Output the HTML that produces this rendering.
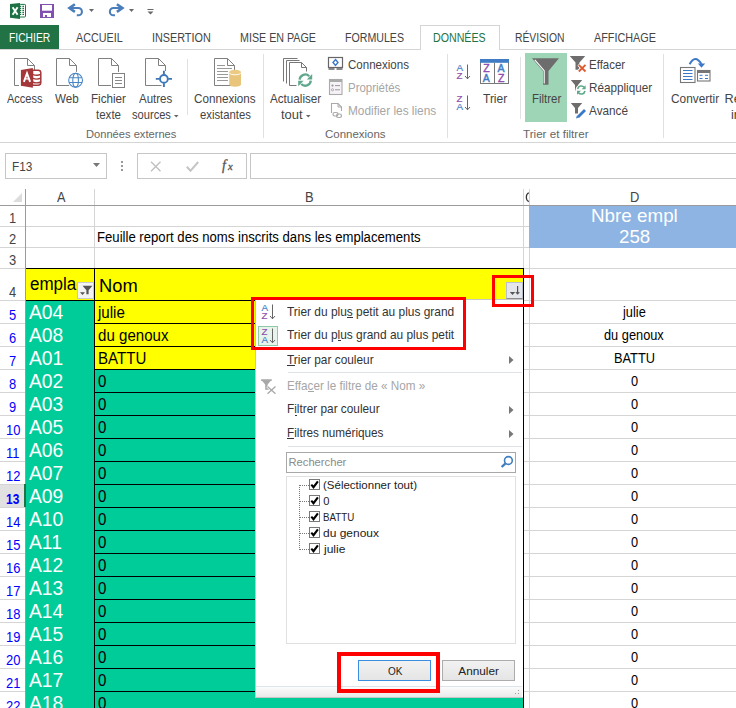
<!DOCTYPE html>
<html><head><meta charset="utf-8"><style>
html,body{margin:0;padding:0;}
body{width:736px;height:708px;overflow:hidden;position:relative;background:#fff;font-family:"Liberation Sans",sans-serif;}
.t{position:absolute;white-space:pre;line-height:normal;transform-origin:0 0;}
svg{overflow:visible}
</style></head><body>
<svg style="position:absolute;left:9px;top:1px" width="19" height="19" viewBox="0 0 19 19"><rect x="10.5" y="3.4" width="6" height="12.6" rx="0.8" fill="#fff" stroke="#1e7145" stroke-width="1"/>
<path d="M11 5.4H12.2M13.4 5.4H15M11 7.4H12.2M13.4 7.4H15M11 9.4H12.2M13.4 9.4H15M11 11.4H12.2M13.4 11.4H15M11 13.4H12.2M13.4 13.4H15" stroke="#1e7145" stroke-width="1.1"/>
<path d="M1 3.1L11 1.9V17.9L1 16.8Z" fill="#1e7145"/>
<path d="M3.6 6.3L8.6 13.8M8.6 6.3L3.6 13.8" stroke="#fff" stroke-width="1.9"/></svg>
<svg style="position:absolute;left:40px;top:4px" width="14" height="14" viewBox="0 0 14 14"><rect x="0" y="0" width="14" height="14" fill="#8150b0"/>
<rect x="2" y="1" width="10" height="5.7" fill="#fff"/>
<rect x="3" y="9" width="8" height="4" fill="#fff"/><rect x="5" y="11" width="2" height="2" fill="#8150b0"/></svg>
<svg style="position:absolute;left:68px;top:3px" width="16" height="15" viewBox="0 0 16 15"><path d="M3 5.05H10.3A3.6 3.6 0 0 1 10.3 12.3H8.8" fill="none" stroke="#4a7ebb" stroke-width="2.1"/>
<path d="M6.9 1.2L1.4 5.05L6.9 8.9" fill="none" stroke="#4a7ebb" stroke-width="2.6" stroke-linejoin="miter"/></svg>
<svg style="position:absolute;left:89px;top:9px" width="6" height="3" viewBox="0 0 6 3"><path d="M0 0H5L2.5 3Z" fill="#666"/></svg>
<svg style="position:absolute;left:108px;top:3px" width="16" height="15" viewBox="0 0 16 15"><g transform="translate(15.8 0) scale(-1 1)"><path d="M3 5.05H10.3A3.6 3.6 0 0 1 10.3 12.3H8.8" fill="none" stroke="#4a7ebb" stroke-width="2.1"/>
<path d="M6.9 1.2L1.4 5.05L6.9 8.9" fill="none" stroke="#4a7ebb" stroke-width="2.6" stroke-linejoin="miter"/></g></svg>
<svg style="position:absolute;left:129px;top:9px" width="6" height="3" viewBox="0 0 6 3"><path d="M0 0H5L2.5 3Z" fill="#666"/></svg>
<svg style="position:absolute;left:147px;top:8px" width="7" height="7" viewBox="0 0 7 7"><path d="M0.5 1.5H6.5" stroke="#666" stroke-width="1"/><path d="M0.5 3.5H6.5L3.5 6.5Z" fill="#666"/></svg>
<div style="position:absolute;left:0px;top:25px;width:59px;height:24px;background:#217346"></div>
<div style="position:absolute;left:0px;top:49px;width:736px;height:1px;background:#d5d5d5"></div>
<div style="position:absolute;left:420px;top:25px;width:80px;height:25px;background:#fff;border:1px solid #d5d5d5;border-bottom:none;box-sizing:border-box"></div>
<div class="t" style="left:8.50px;top:31.14px;font-size:12px;color:#fff;font-weight:normal;transform:scaleX(0.8583);">FICHIER</div>
<div class="t" style="left:76.00px;top:31.14px;font-size:12px;color:#444;font-weight:normal;transform:scaleX(0.8962);">ACCUEIL</div>
<div class="t" style="left:152.00px;top:31.14px;font-size:12px;color:#444;font-weight:normal;transform:scaleX(0.9017);">INSERTION</div>
<div class="t" style="left:240.00px;top:31.14px;font-size:12px;color:#444;font-weight:normal;transform:scaleX(0.8919);">MISE EN PAGE</div>
<div class="t" style="left:345.00px;top:31.14px;font-size:12px;color:#444;font-weight:normal;transform:scaleX(0.8846);">FORMULES</div>
<div class="t" style="left:433.40px;top:31.14px;font-size:12px;color:#217346;font-weight:normal;transform:scaleX(0.8870);">DONNÉES</div>
<div class="t" style="left:515.40px;top:31.14px;font-size:12px;color:#444;font-weight:normal;transform:scaleX(0.8621);">RÉVISION</div>
<div class="t" style="left:594.00px;top:31.14px;font-size:12px;color:#444;font-weight:normal;transform:scaleX(0.9025);">AFFICHAGE</div>
<div style="position:absolute;left:0px;top:142px;width:736px;height:1px;background:#d5d5d5"></div>
<div style="position:absolute;left:187px;top:59px;width:1px;height:56px;background:#e1e1e1"></div>
<div style="position:absolute;left:263px;top:54px;width:1px;height:84px;background:#e1e1e1"></div>
<div style="position:absolute;left:447px;top:54px;width:1px;height:84px;background:#e1e1e1"></div>
<div style="position:absolute;left:520px;top:57px;width:1px;height:62px;background:#e1e1e1"></div>
<div style="position:absolute;left:663px;top:54px;width:1px;height:84px;background:#e1e1e1"></div>
<div class="t" style="left:7.30px;top:91.51px;font-size:12.7px;color:#444;font-weight:normal;transform:scaleX(0.8680);">Access</div>
<div class="t" style="left:55.00px;top:91.51px;font-size:12.7px;color:#444;font-weight:normal;transform:scaleX(0.9151);">Web</div>
<div class="t" style="left:91.00px;top:91.51px;font-size:12.7px;color:#444;font-weight:normal;transform:scaleX(0.9186);">Fichier</div>
<div class="t" style="left:96.00px;top:108.01px;font-size:12.7px;color:#444;font-weight:normal;transform:scaleX(0.9091);">texte</div>
<div class="t" style="left:139.40px;top:91.51px;font-size:12.7px;color:#444;font-weight:normal;transform:scaleX(0.9074);">Autres</div>
<div class="t" style="left:132.00px;top:108.01px;font-size:12.7px;color:#444;font-weight:normal;transform:scaleX(0.8764);">sources</div>
<svg style="position:absolute;left:174px;top:115px" width="5" height="3" viewBox="0 0 5 3"><path d="M0 0H4.5L2.25 2.5Z" fill="#666"/></svg>
<div class="t" style="left:194.00px;top:91.51px;font-size:12.7px;color:#444;font-weight:normal;transform:scaleX(0.9195);">Connexions</div>
<div class="t" style="left:200.00px;top:108.01px;font-size:12.7px;color:#444;font-weight:normal;transform:scaleX(0.8916);">existantes</div>
<div class="t" style="left:270.40px;top:91.51px;font-size:12.7px;color:#444;font-weight:normal;transform:scaleX(0.9194);">Actualiser</div>
<div class="t" style="left:281.00px;top:108.01px;font-size:12.7px;color:#444;font-weight:normal;transform:scaleX(1.0236);">tout</div>
<svg style="position:absolute;left:306px;top:115px" width="5" height="3" viewBox="0 0 5 3"><path d="M0 0H4.5L2.25 2.5Z" fill="#666"/></svg>
<div class="t" style="left:347.70px;top:58.01px;font-size:12.7px;color:#444;font-weight:normal;transform:scaleX(0.9091);">Connexions</div>
<div class="t" style="left:347.70px;top:80.71px;font-size:12.7px;color:#a6a6a6;font-weight:normal;transform:scaleX(0.9033);">Propriétés</div>
<div class="t" style="left:347.70px;top:103.71px;font-size:12.7px;color:#a6a6a6;font-weight:normal;transform:scaleX(0.9334);">Modifier les liens</div>
<div class="t" style="left:483.40px;top:91.51px;font-size:12.7px;color:#444;font-weight:normal;transform:scaleX(0.9453);">Trier</div>
<div style="position:absolute;left:525px;top:53px;width:42px;height:69px;background:#9fd5b7"></div>
<div class="t" style="left:531.70px;top:91.51px;font-size:12.7px;color:#444;font-weight:normal;transform:scaleX(0.9015);">Filtrer</div>
<div class="t" style="left:588.80px;top:57.91px;font-size:12.7px;color:#444;font-weight:normal;transform:scaleX(0.9050);">Effacer</div>
<div class="t" style="left:588.80px;top:80.91px;font-size:12.7px;color:#444;font-weight:normal;transform:scaleX(0.9226);">Réappliquer</div>
<div class="t" style="left:588.80px;top:103.81px;font-size:12.7px;color:#444;font-weight:normal;transform:scaleX(0.9264);">Avancé</div>
<div class="t" style="left:670.70px;top:91.51px;font-size:12.7px;color:#444;font-weight:normal;transform:scaleX(0.9340);">Convertir</div>
<div class="t" style="left:724.50px;top:91.51px;font-size:12.7px;color:#444;font-weight:normal;transform:scaleX(1.0000);">Re</div>
<div class="t" style="left:731.00px;top:108.01px;font-size:12.7px;color:#444;font-weight:normal;transform:scaleX(1.0000);">in</div>
<div class="t" style="left:85.60px;top:126.82px;font-size:11.8px;color:#666;font-weight:normal;transform:scaleX(0.9436);">Données externes</div>
<div class="t" style="left:325.40px;top:126.82px;font-size:11.8px;color:#666;font-weight:normal;transform:scaleX(0.9727);">Connexions</div>
<div class="t" style="left:522.50px;top:126.82px;font-size:11.8px;color:#666;font-weight:normal;transform:scaleX(0.9864);">Trier et filtrer</div>
<div style="position:absolute;left:5px;top:153px;width:102px;height:26px;border:1px solid #c6c6c6;box-sizing:border-box"></div>
<div class="t" style="left:12.40px;top:159.33px;font-size:12.9px;color:#444;font-weight:normal;transform:scaleX(0.9144);">F13</div>
<svg style="position:absolute;left:93px;top:163px" width="7" height="4" viewBox="0 0 7 4"><path d="M0 0H7L3.5 4Z" fill="#777"/></svg>
<div style="position:absolute;left:121px;top:161px;width:2px;height:2px;background:#999"></div>
<div style="position:absolute;left:121px;top:165px;width:2px;height:2px;background:#999"></div>
<div style="position:absolute;left:121px;top:169px;width:2px;height:2px;background:#999"></div>
<div style="position:absolute;left:137px;top:153px;width:110px;height:26px;border:1px solid #c6c6c6;box-sizing:border-box"></div>
<div style="position:absolute;left:250px;top:153px;width:500px;height:26px;border:1px solid #c6c6c6;box-sizing:border-box"></div>
<div style="position:absolute;left:0px;top:189px;width:736px;height:17px;background:#fff"></div>
<div style="position:absolute;left:25px;top:189px;width:1px;height:519px;background:#9b9b9b"></div>
<div style="position:absolute;left:0px;top:205px;width:736px;height:1px;background:#9b9b9b"></div>
<div style="position:absolute;left:94px;top:189px;width:1px;height:16px;background:#d5d5d5"></div>
<div style="position:absolute;left:523px;top:189px;width:1px;height:16px;background:#d5d5d5"></div>
<div style="position:absolute;left:529px;top:189px;width:1px;height:16px;background:#d5d5d5"></div>
<svg style="position:absolute;left:13px;top:193px" width="9" height="9" viewBox="0 0 9 9"><path d="M9 0V9H0Z" fill="#dcdcdc"/></svg>
<div class="t" style="left:56.50px;top:189.42px;font-size:13.9px;color:#444;font-weight:normal;transform:scaleX(0.9140);">A</div>
<div class="t" style="left:304.68px;top:189.42px;font-size:13.9px;color:#444;font-weight:normal;transform:scaleX(0.9300);">B</div>
<div class="t" style="left:630.05px;top:189.42px;font-size:13.9px;color:#444;font-weight:normal;transform:scaleX(0.9300);">D</div>
<svg style="position:absolute;left:524px;top:192px" width="6" height="11" viewBox="0 0 6 11"><path d="M4.8 0.7 A4.3 4.9 0 0 0 4.8 9.6" fill="none" stroke="#333" stroke-width="1.2"/></svg>
<div style="position:absolute;left:0px;top:226px;width:25px;height:1px;background:#d5d5d5"></div>
<div style="position:absolute;left:0px;top:247px;width:25px;height:1px;background:#d5d5d5"></div>
<div style="position:absolute;left:0px;top:268px;width:25px;height:1px;background:#d5d5d5"></div>
<div style="position:absolute;left:0px;top:300px;width:25px;height:1px;background:#d5d5d5"></div>
<div style="position:absolute;left:0px;top:323px;width:25px;height:1px;background:#d5d5d5"></div>
<div style="position:absolute;left:0px;top:346px;width:25px;height:1px;background:#d5d5d5"></div>
<div style="position:absolute;left:0px;top:369px;width:25px;height:1px;background:#d5d5d5"></div>
<div style="position:absolute;left:0px;top:392px;width:25px;height:1px;background:#d5d5d5"></div>
<div style="position:absolute;left:0px;top:415px;width:25px;height:1px;background:#d5d5d5"></div>
<div style="position:absolute;left:0px;top:438px;width:25px;height:1px;background:#d5d5d5"></div>
<div style="position:absolute;left:0px;top:461px;width:25px;height:1px;background:#d5d5d5"></div>
<div style="position:absolute;left:0px;top:484px;width:25px;height:1px;background:#d5d5d5"></div>
<div style="position:absolute;left:0px;top:507px;width:25px;height:1px;background:#d5d5d5"></div>
<div style="position:absolute;left:0px;top:530px;width:25px;height:1px;background:#d5d5d5"></div>
<div style="position:absolute;left:0px;top:553px;width:25px;height:1px;background:#d5d5d5"></div>
<div style="position:absolute;left:0px;top:576px;width:25px;height:1px;background:#d5d5d5"></div>
<div style="position:absolute;left:0px;top:599px;width:25px;height:1px;background:#d5d5d5"></div>
<div style="position:absolute;left:0px;top:622px;width:25px;height:1px;background:#d5d5d5"></div>
<div style="position:absolute;left:0px;top:645px;width:25px;height:1px;background:#d5d5d5"></div>
<div style="position:absolute;left:0px;top:668px;width:25px;height:1px;background:#d5d5d5"></div>
<div style="position:absolute;left:0px;top:691px;width:25px;height:1px;background:#d5d5d5"></div>
<div style="position:absolute;left:0px;top:714px;width:25px;height:1px;background:#d5d5d5"></div>
<div style="position:absolute;left:524px;top:226px;width:212px;height:1px;background:#d5d5d5"></div>
<div style="position:absolute;left:524px;top:247px;width:212px;height:1px;background:#d5d5d5"></div>
<div style="position:absolute;left:524px;top:268px;width:212px;height:1px;background:#d5d5d5"></div>
<div style="position:absolute;left:524px;top:300px;width:212px;height:1px;background:#d5d5d5"></div>
<div style="position:absolute;left:524px;top:323px;width:212px;height:1px;background:#d5d5d5"></div>
<div style="position:absolute;left:524px;top:346px;width:212px;height:1px;background:#d5d5d5"></div>
<div style="position:absolute;left:524px;top:369px;width:212px;height:1px;background:#d5d5d5"></div>
<div style="position:absolute;left:524px;top:392px;width:212px;height:1px;background:#d5d5d5"></div>
<div style="position:absolute;left:524px;top:415px;width:212px;height:1px;background:#d5d5d5"></div>
<div style="position:absolute;left:524px;top:438px;width:212px;height:1px;background:#d5d5d5"></div>
<div style="position:absolute;left:524px;top:461px;width:212px;height:1px;background:#d5d5d5"></div>
<div style="position:absolute;left:524px;top:484px;width:212px;height:1px;background:#d5d5d5"></div>
<div style="position:absolute;left:524px;top:507px;width:212px;height:1px;background:#d5d5d5"></div>
<div style="position:absolute;left:524px;top:530px;width:212px;height:1px;background:#d5d5d5"></div>
<div style="position:absolute;left:524px;top:553px;width:212px;height:1px;background:#d5d5d5"></div>
<div style="position:absolute;left:524px;top:576px;width:212px;height:1px;background:#d5d5d5"></div>
<div style="position:absolute;left:524px;top:599px;width:212px;height:1px;background:#d5d5d5"></div>
<div style="position:absolute;left:524px;top:622px;width:212px;height:1px;background:#d5d5d5"></div>
<div style="position:absolute;left:524px;top:645px;width:212px;height:1px;background:#d5d5d5"></div>
<div style="position:absolute;left:524px;top:668px;width:212px;height:1px;background:#d5d5d5"></div>
<div style="position:absolute;left:524px;top:691px;width:212px;height:1px;background:#d5d5d5"></div>
<div style="position:absolute;left:524px;top:714px;width:212px;height:1px;background:#d5d5d5"></div>
<div style="position:absolute;left:26px;top:226px;width:498px;height:1px;background:#d5d5d5"></div>
<div style="position:absolute;left:26px;top:247px;width:498px;height:1px;background:#d5d5d5"></div>
<div style="position:absolute;left:94px;top:206px;width:1px;height:62px;background:#d5d5d5"></div>
<div style="position:absolute;left:523px;top:206px;width:1px;height:62px;background:#d5d5d5"></div>
<div style="position:absolute;left:529px;top:206px;width:1px;height:502px;background:#d5d5d5"></div>
<div class="t" style="left:9.22px;top:210.42px;font-size:13.9px;color:#444;font-weight:normal;transform:scaleX(0.9300);">1</div>
<div class="t" style="left:9.22px;top:231.42px;font-size:13.9px;color:#444;font-weight:normal;transform:scaleX(0.9300);">2</div>
<div class="t" style="left:9.22px;top:252.42px;font-size:13.9px;color:#444;font-weight:normal;transform:scaleX(0.9300);">3</div>
<div class="t" style="left:9.22px;top:284.42px;font-size:13.9px;color:#444;font-weight:normal;transform:scaleX(0.9300);">4</div>
<div class="t" style="left:9.22px;top:307.42px;font-size:13.9px;color:#0000ff;font-weight:normal;transform:scaleX(0.9300);">5</div>
<div class="t" style="left:9.22px;top:330.42px;font-size:13.9px;color:#0000ff;font-weight:normal;transform:scaleX(0.9300);">6</div>
<div class="t" style="left:9.22px;top:353.42px;font-size:13.9px;color:#0000ff;font-weight:normal;transform:scaleX(0.9300);">7</div>
<div class="t" style="left:9.22px;top:376.42px;font-size:13.9px;color:#0000ff;font-weight:normal;transform:scaleX(0.9300);">8</div>
<div class="t" style="left:9.22px;top:399.42px;font-size:13.9px;color:#0000ff;font-weight:normal;transform:scaleX(0.9300);">9</div>
<div class="t" style="left:5.59px;top:422.42px;font-size:13.9px;color:#0000ff;font-weight:normal;transform:scaleX(0.9300);">10</div>
<div class="t" style="left:6.10px;top:445.42px;font-size:13.9px;color:#0000ff;font-weight:normal;transform:scaleX(0.9300);">11</div>
<div class="t" style="left:5.59px;top:468.42px;font-size:13.9px;color:#0000ff;font-weight:normal;transform:scaleX(0.9300);">12</div>
<div style="position:absolute;left:0px;top:485px;width:24px;height:22px;background:#e1e1e1"></div>
<div style="position:absolute;left:24px;top:484px;width:2px;height:23px;background:#217346"></div>
<div class="t" style="left:6.14px;top:491.42px;font-size:13.9px;color:#0000ff;font-weight:bold;transform:scaleX(0.8600);">13</div>
<div class="t" style="left:5.59px;top:514.42px;font-size:13.9px;color:#0000ff;font-weight:normal;transform:scaleX(0.9300);">14</div>
<div class="t" style="left:5.59px;top:537.42px;font-size:13.9px;color:#0000ff;font-weight:normal;transform:scaleX(0.9300);">15</div>
<div class="t" style="left:5.59px;top:560.42px;font-size:13.9px;color:#0000ff;font-weight:normal;transform:scaleX(0.9300);">16</div>
<div class="t" style="left:5.59px;top:583.42px;font-size:13.9px;color:#0000ff;font-weight:normal;transform:scaleX(0.9300);">17</div>
<div class="t" style="left:5.59px;top:606.42px;font-size:13.9px;color:#0000ff;font-weight:normal;transform:scaleX(0.9300);">18</div>
<div class="t" style="left:5.59px;top:629.42px;font-size:13.9px;color:#0000ff;font-weight:normal;transform:scaleX(0.9300);">19</div>
<div class="t" style="left:5.59px;top:652.42px;font-size:13.9px;color:#0000ff;font-weight:normal;transform:scaleX(0.9300);">20</div>
<div class="t" style="left:5.59px;top:675.42px;font-size:13.9px;color:#0000ff;font-weight:normal;transform:scaleX(0.9300);">21</div>
<div class="t" style="left:5.59px;top:698.42px;font-size:13.9px;color:#0000ff;font-weight:normal;transform:scaleX(0.9300);">22</div>
<div style="position:absolute;left:529px;top:206px;width:207px;height:42px;background:#8db4e2"></div>
<div class="t" style="left:590.94px;top:205.41px;font-size:19px;color:#fff;font-weight:normal;transform:scaleX(0.9900);">Nbre empl</div>
<div class="t" style="left:618.69px;top:226.31px;font-size:19px;color:#fff;font-weight:normal;transform:scaleX(0.9850);">258</div>
<div class="t" style="left:97.40px;top:229.13px;font-size:14px;color:#000;font-weight:normal;transform:scaleX(0.9388);">Feuille report des noms inscrits dans les emplacements</div>
<div style="position:absolute;left:26px;top:268px;width:498px;height:440px;background:#00cc99"></div>
<div style="position:absolute;left:26px;top:269px;width:497px;height:31px;background:#ffff00"></div>
<div style="position:absolute;left:95px;top:300px;width:428px;height:69px;background:#ffff00"></div>
<div style="position:absolute;left:26px;top:268px;width:498px;height:1px;background:#000"></div>
<div style="position:absolute;left:95px;top:300px;width:429px;height:1px;background:#000"></div>
<div style="position:absolute;left:95px;top:323px;width:429px;height:1px;background:#000"></div>
<div style="position:absolute;left:95px;top:346px;width:429px;height:1px;background:#000"></div>
<div style="position:absolute;left:95px;top:369px;width:429px;height:1px;background:#000"></div>
<div style="position:absolute;left:95px;top:392px;width:429px;height:1px;background:#000"></div>
<div style="position:absolute;left:95px;top:415px;width:429px;height:1px;background:#000"></div>
<div style="position:absolute;left:95px;top:438px;width:429px;height:1px;background:#000"></div>
<div style="position:absolute;left:95px;top:461px;width:429px;height:1px;background:#000"></div>
<div style="position:absolute;left:95px;top:484px;width:429px;height:1px;background:#000"></div>
<div style="position:absolute;left:95px;top:507px;width:429px;height:1px;background:#000"></div>
<div style="position:absolute;left:95px;top:530px;width:429px;height:1px;background:#000"></div>
<div style="position:absolute;left:95px;top:553px;width:429px;height:1px;background:#000"></div>
<div style="position:absolute;left:95px;top:576px;width:429px;height:1px;background:#000"></div>
<div style="position:absolute;left:95px;top:599px;width:429px;height:1px;background:#000"></div>
<div style="position:absolute;left:95px;top:622px;width:429px;height:1px;background:#000"></div>
<div style="position:absolute;left:95px;top:645px;width:429px;height:1px;background:#000"></div>
<div style="position:absolute;left:95px;top:668px;width:429px;height:1px;background:#000"></div>
<div style="position:absolute;left:95px;top:691px;width:429px;height:1px;background:#000"></div>
<div style="position:absolute;left:95px;top:714px;width:429px;height:1px;background:#000"></div>
<div style="position:absolute;left:26px;top:300px;width:69px;height:1px;background:#000"></div>
<div style="position:absolute;left:94px;top:268px;width:1px;height:440px;background:#000"></div>
<div style="position:absolute;left:523px;top:268px;width:1px;height:440px;background:#000"></div>
<div style="position:absolute;left:26px;top:269px;width:51px;height:31px;overflow:hidden">
<div class="t" style="left:3.60px;top:5.31px;font-size:18px;color:#000;font-weight:normal;transform:scaleX(0.9440);">emplacement</div>
</div>
<div class="t" style="left:98.70px;top:275.53px;font-size:18.2px;color:#000;font-weight:normal;transform:scaleX(1.0078);">Nom</div>
<div style="position:absolute;left:77px;top:282px;width:17px;height:17px;background:#f3f3f3;border:1px solid #c8c8c8;box-sizing:border-box"></div>
<svg style="position:absolute;left:79px;top:284px" width="15" height="13" viewBox="0 0 15 13"><path d="M3.6 1.8H13.4L9.6 6.2V10.2H7.4V6.2Z" fill="#555"/><path d="M1 8.2H6L3.5 11Z" fill="#555"/></svg>
<div style="position:absolute;left:506px;top:282px;width:17px;height:17px;background:#e4e6ec;border:1px solid #b9bfcc;border-bottom:1px solid #8c8c8c;box-sizing:border-box"></div>
<svg style="position:absolute;left:508px;top:284px" width="13" height="13" viewBox="0 0 13 13"><path d="M1.8 8H7.2L4.5 11Z" fill="#555"/><path d="M9.6 2V9.8M7.9 8.1L9.6 9.8L11.3 8.1" fill="none" stroke="#555" stroke-width="1.2"/></svg>
<div class="t" style="left:29.10px;top:301.39px;font-size:19.9px;color:#fff;font-weight:normal;transform:scaleX(0.9700);">A04</div>
<div class="t" style="left:98.06px;top:302.87px;font-size:16.5px;color:#000;font-weight:normal;transform:scaleX(0.9150);">julie</div>
<div class="t" style="left:623.10px;top:304.13px;font-size:14px;color:#000;font-weight:normal;transform:scaleX(0.9140);">julie</div>
<div class="t" style="left:29.10px;top:324.39px;font-size:19.9px;color:#fff;font-weight:normal;transform:scaleX(0.9700);">A08</div>
<div class="t" style="left:97.60px;top:325.87px;font-size:16.5px;color:#000;font-weight:normal;transform:scaleX(0.9150);">du genoux</div>
<div class="t" style="left:604.41px;top:327.13px;font-size:14px;color:#000;font-weight:normal;transform:scaleX(0.9140);">du genoux</div>
<div class="t" style="left:29.10px;top:347.39px;font-size:19.9px;color:#fff;font-weight:normal;transform:scaleX(0.9700);">A01</div>
<div class="t" style="left:97.60px;top:348.87px;font-size:16.5px;color:#000;font-weight:normal;transform:scaleX(0.9150);">BATTU</div>
<div class="t" style="left:613.78px;top:350.13px;font-size:14px;color:#000;font-weight:normal;transform:scaleX(0.9140);">BATTU</div>
<div class="t" style="left:29.10px;top:370.39px;font-size:19.9px;color:#fff;font-weight:normal;transform:scaleX(0.9700);">A02</div>
<div class="t" style="left:97.60px;top:371.87px;font-size:16.5px;color:#000;font-weight:normal;transform:scaleX(0.9150);">0</div>
<div class="t" style="left:630.74px;top:373.13px;font-size:14px;color:#000;font-weight:normal;transform:scaleX(0.9140);">0</div>
<div class="t" style="left:29.10px;top:393.39px;font-size:19.9px;color:#fff;font-weight:normal;transform:scaleX(0.9700);">A03</div>
<div class="t" style="left:97.60px;top:394.87px;font-size:16.5px;color:#000;font-weight:normal;transform:scaleX(0.9150);">0</div>
<div class="t" style="left:630.74px;top:396.13px;font-size:14px;color:#000;font-weight:normal;transform:scaleX(0.9140);">0</div>
<div class="t" style="left:29.10px;top:416.39px;font-size:19.9px;color:#fff;font-weight:normal;transform:scaleX(0.9700);">A05</div>
<div class="t" style="left:97.60px;top:417.87px;font-size:16.5px;color:#000;font-weight:normal;transform:scaleX(0.9150);">0</div>
<div class="t" style="left:630.74px;top:419.13px;font-size:14px;color:#000;font-weight:normal;transform:scaleX(0.9140);">0</div>
<div class="t" style="left:29.10px;top:439.39px;font-size:19.9px;color:#fff;font-weight:normal;transform:scaleX(0.9700);">A06</div>
<div class="t" style="left:97.60px;top:440.87px;font-size:16.5px;color:#000;font-weight:normal;transform:scaleX(0.9150);">0</div>
<div class="t" style="left:630.74px;top:442.13px;font-size:14px;color:#000;font-weight:normal;transform:scaleX(0.9140);">0</div>
<div class="t" style="left:29.10px;top:462.39px;font-size:19.9px;color:#fff;font-weight:normal;transform:scaleX(0.9700);">A07</div>
<div class="t" style="left:97.60px;top:463.87px;font-size:16.5px;color:#000;font-weight:normal;transform:scaleX(0.9150);">0</div>
<div class="t" style="left:630.74px;top:465.13px;font-size:14px;color:#000;font-weight:normal;transform:scaleX(0.9140);">0</div>
<div class="t" style="left:29.10px;top:485.39px;font-size:19.9px;color:#fff;font-weight:normal;transform:scaleX(0.9700);">A09</div>
<div class="t" style="left:97.60px;top:486.87px;font-size:16.5px;color:#000;font-weight:normal;transform:scaleX(0.9150);">0</div>
<div class="t" style="left:630.74px;top:488.13px;font-size:14px;color:#000;font-weight:normal;transform:scaleX(0.9140);">0</div>
<div class="t" style="left:29.10px;top:508.39px;font-size:19.9px;color:#fff;font-weight:normal;transform:scaleX(0.9700);">A10</div>
<div class="t" style="left:97.60px;top:509.87px;font-size:16.5px;color:#000;font-weight:normal;transform:scaleX(0.9150);">0</div>
<div class="t" style="left:630.74px;top:511.13px;font-size:14px;color:#000;font-weight:normal;transform:scaleX(0.9140);">0</div>
<div class="t" style="left:29.10px;top:531.39px;font-size:19.9px;color:#fff;font-weight:normal;transform:scaleX(0.9700);">A11</div>
<div class="t" style="left:97.60px;top:532.87px;font-size:16.5px;color:#000;font-weight:normal;transform:scaleX(0.9150);">0</div>
<div class="t" style="left:630.74px;top:534.13px;font-size:14px;color:#000;font-weight:normal;transform:scaleX(0.9140);">0</div>
<div class="t" style="left:29.10px;top:554.39px;font-size:19.9px;color:#fff;font-weight:normal;transform:scaleX(0.9700);">A12</div>
<div class="t" style="left:97.60px;top:555.87px;font-size:16.5px;color:#000;font-weight:normal;transform:scaleX(0.9150);">0</div>
<div class="t" style="left:630.74px;top:557.13px;font-size:14px;color:#000;font-weight:normal;transform:scaleX(0.9140);">0</div>
<div class="t" style="left:29.10px;top:577.39px;font-size:19.9px;color:#fff;font-weight:normal;transform:scaleX(0.9700);">A13</div>
<div class="t" style="left:97.60px;top:578.87px;font-size:16.5px;color:#000;font-weight:normal;transform:scaleX(0.9150);">0</div>
<div class="t" style="left:630.74px;top:580.13px;font-size:14px;color:#000;font-weight:normal;transform:scaleX(0.9140);">0</div>
<div class="t" style="left:29.10px;top:600.39px;font-size:19.9px;color:#fff;font-weight:normal;transform:scaleX(0.9700);">A14</div>
<div class="t" style="left:97.60px;top:601.87px;font-size:16.5px;color:#000;font-weight:normal;transform:scaleX(0.9150);">0</div>
<div class="t" style="left:630.74px;top:603.13px;font-size:14px;color:#000;font-weight:normal;transform:scaleX(0.9140);">0</div>
<div class="t" style="left:29.10px;top:623.39px;font-size:19.9px;color:#fff;font-weight:normal;transform:scaleX(0.9700);">A15</div>
<div class="t" style="left:97.60px;top:624.87px;font-size:16.5px;color:#000;font-weight:normal;transform:scaleX(0.9150);">0</div>
<div class="t" style="left:630.74px;top:626.13px;font-size:14px;color:#000;font-weight:normal;transform:scaleX(0.9140);">0</div>
<div class="t" style="left:29.10px;top:646.39px;font-size:19.9px;color:#fff;font-weight:normal;transform:scaleX(0.9700);">A16</div>
<div class="t" style="left:97.60px;top:647.87px;font-size:16.5px;color:#000;font-weight:normal;transform:scaleX(0.9150);">0</div>
<div class="t" style="left:630.74px;top:649.13px;font-size:14px;color:#000;font-weight:normal;transform:scaleX(0.9140);">0</div>
<div class="t" style="left:29.10px;top:669.39px;font-size:19.9px;color:#fff;font-weight:normal;transform:scaleX(0.9700);">A17</div>
<div class="t" style="left:97.60px;top:670.87px;font-size:16.5px;color:#000;font-weight:normal;transform:scaleX(0.9150);">0</div>
<div class="t" style="left:630.74px;top:672.13px;font-size:14px;color:#000;font-weight:normal;transform:scaleX(0.9140);">0</div>
<div class="t" style="left:29.10px;top:692.39px;font-size:19.9px;color:#fff;font-weight:normal;transform:scaleX(0.9700);">A18</div>
<div class="t" style="left:97.60px;top:693.87px;font-size:16.5px;color:#000;font-weight:normal;transform:scaleX(0.9150);">0</div>
<div class="t" style="left:630.74px;top:695.13px;font-size:14px;color:#000;font-weight:normal;transform:scaleX(0.9140);">0</div>
<div style="position:absolute;left:255px;top:299px;width:268px;height:399px;background:#fff;border:1px solid #c6c6c6;border-right:none;box-sizing:border-box"></div>
<div class="t" style="left:287.30px;top:304.51px;font-size:12.7px;color:#333;font-weight:normal;transform:scaleX(0.9394);">Trier du plus petit au plus grand</div>
<div class="t" style="left:287.30px;top:328.01px;font-size:12.7px;color:#333;font-weight:normal;transform:scaleX(0.9394);">Trier du plus grand au plus petit</div>
<div class="t" style="left:287.30px;top:352.51px;font-size:12.7px;color:#333;font-weight:normal;transform:scaleX(0.9353);">Trier par couleur</div>
<div style="position:absolute;left:288px;top:372px;width:234px;height:1px;background:#dfe2e6"></div>
<div class="t" style="left:287.30px;top:378.51px;font-size:12.7px;color:#a6a6a6;font-weight:normal;transform:scaleX(0.9221);">Effacer le filtre de « Nom »</div>
<div class="t" style="left:287.30px;top:402.21px;font-size:12.7px;color:#333;font-weight:normal;transform:scaleX(0.9317);">Filtrer par couleur</div>
<div class="t" style="left:287.30px;top:425.91px;font-size:12.7px;color:#333;font-weight:normal;transform:scaleX(0.9244);">Filtres numériques</div>
<div style="position:absolute;left:288px;top:446px;width:234px;height:1px;background:#dfe2e6"></div>
<div style="position:absolute;left:347.19px;top:317px;width:5.96px;height:1px;background:#333"></div>
<div style="position:absolute;left:337.91px;top:340px;width:2.65px;height:1px;background:#333"></div>
<div style="position:absolute;left:287.30px;top:365px;width:7.26px;height:1px;background:#333"></div>
<div style="position:absolute;left:307.92px;top:391px;width:5.86px;height:1px;background:#a6a6a6"></div>
<div style="position:absolute;left:294.53px;top:415px;width:2.63px;height:1px;background:#333"></div>
<div style="position:absolute;left:287.30px;top:438px;width:7.17px;height:1px;background:#333"></div>
<svg style="position:absolute;left:509px;top:356px" width="5" height="8" viewBox="0 0 5 8"><path d="M0 0L4.5 4L0 8Z" fill="#777"/></svg>
<svg style="position:absolute;left:509px;top:406px" width="5" height="8" viewBox="0 0 5 8"><path d="M0 0L4.5 4L0 8Z" fill="#777"/></svg>
<svg style="position:absolute;left:509px;top:430px" width="5" height="8" viewBox="0 0 5 8"><path d="M0 0L4.5 4L0 8Z" fill="#777"/></svg>
<svg style="position:absolute;left:261px;top:304px" width="16" height="17" viewBox="0 0 16 17"><text x="0.6" y="7.1" font-size="9.8" font-family="Liberation Sans" fill="#3f7cc5" stroke="#3f7cc5" stroke-width="0.15">A</text>
<text x="0.6" y="15.1" font-size="9.8" font-family="Liberation Sans" fill="#8e4cae" stroke="#8e4cae" stroke-width="0.15">Z</text>
<path d="M11.5 0.5V15M9 12L11.5 14.8L14 12" fill="none" stroke="#666" stroke-width="1"/></svg>
<div style="position:absolute;left:258px;top:326px;width:20px;height:20px;background:#e8f3ec;border:1px solid #8fc9a5;box-sizing:border-box"></div>
<svg style="position:absolute;left:261px;top:328px" width="16" height="17" viewBox="0 0 16 17"><text x="0.6" y="7.1" font-size="9.8" font-family="Liberation Sans" fill="#8e4cae" stroke="#8e4cae" stroke-width="0.15">Z</text>
<text x="0.6" y="15.1" font-size="9.8" font-family="Liberation Sans" fill="#3f7cc5" stroke="#3f7cc5" stroke-width="0.15">A</text>
<path d="M11.5 0.5V15M9 12L11.5 14.8L14 12" fill="none" stroke="#666" stroke-width="1"/></svg>
<svg style="position:absolute;left:260px;top:379px" width="17" height="17" viewBox="0 0 17 17"><path d="M1 0.5H11.8L7.6 5.5H5.2Z" fill="#a8a8a8"/><path d="M1 0.5H11.8V1.8H1Z" fill="#a8a8a8"/><path d="M5.2 5H7.6V8.5H9.5V10.8H5.2Z" fill="#a8a8a8"/><path d="M7.2 7.2L15.6 15M15.6 7.2L7.2 15" stroke="#fff" stroke-width="2.6"/><path d="M7.5 7.5L15.5 14.8M15.5 7.5L7.5 14.8" stroke="#a8a8a8" stroke-width="1.3"/></svg>
<div style="position:absolute;left:286px;top:452px;width:230px;height:21px;border:1px solid #a8a8a8;box-sizing:border-box;background:#fff"></div>
<div class="t" style="left:288.50px;top:455.66px;font-size:11.2px;color:#8a8a8a;font-weight:normal;transform:scaleX(1.0000);">Rechercher</div>
<svg style="position:absolute;left:499px;top:454px" width="14" height="14" viewBox="0 0 14 14"><circle cx="9.4" cy="6.5" r="3.9" fill="none" stroke="#3e7dc0" stroke-width="1.6"/><path d="M6.6 9.3L2.6 13" stroke="#3e7dc0" stroke-width="2.3"/></svg>
<div style="position:absolute;left:286px;top:476px;width:230px;height:168px;border:1px solid #e0e0e0;box-sizing:border-box;background:#fff"></div>
<div style="position:absolute;left:299px;top:485px;width:1px;height:65px;background-image:linear-gradient(#777 50%,transparent 50%);background-size:1px 2px"></div>
<div style="position:absolute;left:300px;top:485px;width:9px;height:1px;background-image:linear-gradient(90deg,#777 50%,transparent 50%);background-size:2px 1px"></div>
<div style="position:absolute;left:309px;top:479px;width:11px;height:11px;border:1px solid #7a7a7a;box-sizing:border-box;background:#fff"></div>
<svg style="position:absolute;left:310px;top:480px" width="9" height="9" viewBox="0 0 9 9"><path d="M1.3 4.6L3.5 7.2L7.9 1.4" fill="none" stroke="#000" stroke-width="2.1"/></svg>
<div class="t" style="left:323.30px;top:478.56px;font-size:11.2px;color:#222;font-weight:normal;transform:scaleX(1.0284);">(Sélectionner tout)</div>
<div style="position:absolute;left:300px;top:501px;width:9px;height:1px;background-image:linear-gradient(90deg,#777 50%,transparent 50%);background-size:2px 1px"></div>
<div style="position:absolute;left:309px;top:495px;width:11px;height:11px;border:1px solid #7a7a7a;box-sizing:border-box;background:#fff"></div>
<svg style="position:absolute;left:310px;top:496px" width="9" height="9" viewBox="0 0 9 9"><path d="M1.3 4.6L3.5 7.2L7.9 1.4" fill="none" stroke="#000" stroke-width="2.1"/></svg>
<div class="t" style="left:323.30px;top:494.56px;font-size:11.2px;color:#222;font-weight:normal;transform:scaleX(1.0000);">0</div>
<div style="position:absolute;left:300px;top:517px;width:9px;height:1px;background-image:linear-gradient(90deg,#777 50%,transparent 50%);background-size:2px 1px"></div>
<div style="position:absolute;left:309px;top:511px;width:11px;height:11px;border:1px solid #7a7a7a;box-sizing:border-box;background:#fff"></div>
<svg style="position:absolute;left:310px;top:512px" width="9" height="9" viewBox="0 0 9 9"><path d="M1.3 4.6L3.5 7.2L7.9 1.4" fill="none" stroke="#000" stroke-width="2.1"/></svg>
<div class="t" style="left:323.30px;top:510.56px;font-size:11.2px;color:#222;font-weight:normal;transform:scaleX(0.8719);">BATTU</div>
<div style="position:absolute;left:300px;top:533px;width:9px;height:1px;background-image:linear-gradient(90deg,#777 50%,transparent 50%);background-size:2px 1px"></div>
<div style="position:absolute;left:309px;top:527px;width:11px;height:11px;border:1px solid #7a7a7a;box-sizing:border-box;background:#fff"></div>
<svg style="position:absolute;left:310px;top:528px" width="9" height="9" viewBox="0 0 9 9"><path d="M1.3 4.6L3.5 7.2L7.9 1.4" fill="none" stroke="#000" stroke-width="2.1"/></svg>
<div class="t" style="left:323.30px;top:526.56px;font-size:11.2px;color:#222;font-weight:normal;transform:scaleX(1.0707);">du genoux</div>
<div style="position:absolute;left:300px;top:549px;width:9px;height:1px;background-image:linear-gradient(90deg,#777 50%,transparent 50%);background-size:2px 1px"></div>
<div style="position:absolute;left:309px;top:543px;width:11px;height:11px;border:1px solid #7a7a7a;box-sizing:border-box;background:#fff"></div>
<svg style="position:absolute;left:310px;top:544px" width="9" height="9" viewBox="0 0 9 9"><path d="M1.3 4.6L3.5 7.2L7.9 1.4" fill="none" stroke="#000" stroke-width="2.1"/></svg>
<div class="t" style="left:323.62px;top:542.56px;font-size:11.2px;color:#222;font-weight:normal;transform:scaleX(1.0743);">julie</div>
<div style="position:absolute;left:358px;top:660px;width:73px;height:21px;border:1px solid #3c8fe0;box-sizing:border-box;background:linear-gradient(#f2f2f2,#e5e5e5)"></div>
<div class="t" style="left:387.60px;top:664.12px;font-size:11.8px;color:#222;font-weight:normal;transform:scaleX(0.8471);">OK</div>
<div style="position:absolute;left:442px;top:660px;width:73px;height:21px;border:1px solid #acacac;box-sizing:border-box;background:linear-gradient(#f2f2f2,#e5e5e5)"></div>
<div class="t" style="left:458.30px;top:664.12px;font-size:11.8px;color:#222;font-weight:normal;transform:scaleX(1.0000);">Annuler</div>
<div style="position:absolute;left:256px;top:686px;width:266px;height:1px;background:#dce3ea"></div>
<div style="position:absolute;left:256px;top:687px;width:266px;height:10px;background:linear-gradient(#fcfcfc,#e9e9e9)"></div>
<div style="position:absolute;left:518px;top:690px;width:1px;height:1px;background:#999"></div>
<div style="position:absolute;left:515px;top:693px;width:1px;height:1px;background:#999"></div>
<div style="position:absolute;left:518px;top:693px;width:1px;height:1px;background:#999"></div>
<div style="position:absolute;left:251px;top:297px;width:215px;height:53px;border:3px solid #ff0000;box-sizing:border-box"></div>
<div style="position:absolute;left:492px;top:275px;width:42px;height:32px;border:3px solid #ff0000;box-sizing:border-box"></div>
<div style="position:absolute;left:337px;top:652px;width:103px;height:41px;border:4px solid #ff0000;box-sizing:border-box"></div>
<svg style="position:absolute;left:150px;top:161px" width="12" height="11" viewBox="0 0 12 11"><path d="M1 0.8L10.5 10.2M10.5 0.8L1 10.2" stroke="#bdbdbd" stroke-width="1.2"/></svg>
<svg style="position:absolute;left:186px;top:161px" width="13" height="11" viewBox="0 0 13 11"><path d="M0.8 5.8L4.5 9.8L12.2 1" fill="none" stroke="#c4c4c4" stroke-width="2"/></svg>
<svg style="position:absolute;left:222px;top:158px" width="14" height="15" viewBox="0 0 14 15"><text x="0" y="11.5" font-size="14" font-family="Liberation Serif" font-style="italic" fill="#555" stroke="#555" stroke-width="0.3">f</text><text x="6" y="11.6" font-size="10.5" font-family="Liberation Serif" font-style="italic" fill="#555" stroke="#555" stroke-width="0.3">x</text></svg>
<svg style="position:absolute;left:13px;top:57px" width="23" height="30" viewBox="0 0 23 30"><path d="M1.5 1.5H14.5L21.5 8.5V28.5H1.5Z M14.5 1.5V8.5H21.5" fill="#fff" stroke="#808080" stroke-width="1"/></svg>
<svg style="position:absolute;left:19px;top:66px" width="24" height="24" viewBox="0 0 24 24"><rect x="0" y="0" width="2" height="22" fill="#fff"/>
<path d="M13.5 4.2H19.2A2.6 2.6 0 0 1 21.8 6.8V16.6A2.6 2.6 0 0 1 19.2 19.2H13.5Z" fill="#fff" stroke="#a4373a" stroke-width="1.5"/>
<path d="M13.5 8.4Q18 10.2 21.8 8.4M13.5 12.2Q18 14 21.8 12.2M13.5 16Q18 17.8 21.8 16" fill="none" stroke="#a4373a" stroke-width="1.4"/>
<path d="M1.9 4L13.9 2V21.8L1.9 19.8Z" fill="#a4373a"/>
<path d="M4.9 15.9L8 7.3L11.1 15.9" fill="none" stroke="#fff" stroke-width="1.9" stroke-linejoin="miter"/><path d="M6.3 12.9H9.7" stroke="#fff" stroke-width="1.3"/></svg>
<svg style="position:absolute;left:55px;top:57px" width="23" height="30" viewBox="0 0 23 30"><path d="M1.5 1.5H14.5L21.5 8.5V28.5H1.5Z M14.5 1.5V8.5H21.5" fill="#fff" stroke="#808080" stroke-width="1"/></svg>
<svg style="position:absolute;left:66px;top:71px" width="19" height="19" viewBox="0 0 19 19"><circle cx="9.6" cy="9.2" r="8.4" fill="#fff"/>
<circle cx="9.6" cy="9.2" r="6.9" fill="none" stroke="#4a86c5" stroke-width="1.1"/>
<ellipse cx="9.6" cy="9.2" rx="2.8" ry="6.9" fill="none" stroke="#4a86c5" stroke-width="1.1"/>
<path d="M3.2 6.7H16M3.2 11.5H16" stroke="#4a86c5" stroke-width="1.1"/></svg>
<svg style="position:absolute;left:97px;top:57px" width="23" height="30" viewBox="0 0 23 30"><path d="M1.5 1.5H14.5L21.5 8.5V28.5H1.5Z M14.5 1.5V8.5H21.5" fill="#fff" stroke="#808080" stroke-width="1"/></svg>
<svg style="position:absolute;left:110px;top:71px" width="17" height="19" viewBox="0 0 17 19"><rect x="1" y="1" width="16" height="18" fill="#fff"/><rect x="2.5" y="2.5" width="12" height="14" fill="#fff" stroke="#808080" stroke-width="1"/><path d="M5 6.5H12M5 9.5H12M5 12.5H12" stroke="#8a8a8a" stroke-width="1"/></svg>
<svg style="position:absolute;left:144px;top:57px" width="23" height="30" viewBox="0 0 23 30"><path d="M1.5 1.5H14.5L21.5 8.5V28.5H1.5Z M14.5 1.5V8.5H21.5" fill="#fff" stroke="#808080" stroke-width="1"/></svg>
<svg style="position:absolute;left:155px;top:70px" width="18" height="18" viewBox="0 0 18 18"><rect x="6.5" y="1" width="10.5" height="16.5" fill="#fff"/>
<circle cx="8.9" cy="8.9" r="3.9" fill="#fff" stroke="#3c78b9" stroke-width="1.9"/>
<path d="M8.9 0.8V4.6M8.9 13.2V17M0.8 8.9H4.6M13.2 8.9H17" stroke="#3c78b9" stroke-width="1.9"/></svg>
<svg style="position:absolute;left:213px;top:57px" width="23" height="30" viewBox="0 0 23 30"><path d="M1.5 1.5H14.5L21.5 8.5V28.5H1.5Z M14.5 1.5V8.5H21.5" fill="#fff" stroke="#808080" stroke-width="1"/></svg>
<svg style="position:absolute;left:216px;top:63px" width="17" height="20" viewBox="0 0 17 20"><path d="M1 2.5H9M1 5.5H16M1 8.5H12M1 11.5H12M1 14.5H12M1 17.5H12" stroke="#999" stroke-width="1"/></svg>
<svg style="position:absolute;left:229px;top:69px" width="13" height="19" viewBox="0 0 13 19"><path d="M0.2 3.2V15.8A6 2.3 0 0 0 12 15.8V3.2Z" fill="#e8c57a"/><ellipse cx="6.1" cy="3.2" rx="5.9" ry="2.5" fill="#ecca82"/><path d="M0.3 4.1A6 2.4 0 0 0 11.9 4.1" fill="none" stroke="#fff" stroke-width="0.9"/></svg>
<svg style="position:absolute;left:281px;top:57px" width="30" height="31" viewBox="0 0 30 31"><path d="M2.5 24.5V1.5H16.5" fill="none" stroke="#777" stroke-width="1"/>
<path d="M5.5 26.5V3.5H18.5" fill="none" stroke="#777" stroke-width="1"/>
<path d="M8.5 28.5V5.5H20.5L25.5 10.5V14.5" fill="#fff" stroke="#777" stroke-width="1"/>
<path d="M20.5 5.5V10.5H25.5" fill="none" stroke="#777" stroke-width="1"/>
<path d="M8.5 28.5H15.5" stroke="#777" stroke-width="1"/></svg>
<svg style="position:absolute;left:297px;top:72px" width="17" height="17" viewBox="0 0 17 17"><circle cx="8.2" cy="8.1" r="7.6" fill="#fff"/>
<path d="M2.6 7.6A5.6 5.6 0 0 1 12.2 4.2" fill="none" stroke="#5fa88b" stroke-width="2.3"/>
<path d="M15.2 2V7.4H9.8Z" fill="#5fa88b"/>
<path d="M13.8 8.6A5.6 5.6 0 0 1 4.2 12" fill="none" stroke="#5fa88b" stroke-width="2.3"/>
<path d="M1.2 14.2V8.8H6.6Z" fill="#5fa88b"/></svg>
<svg style="position:absolute;left:327px;top:56px" width="17" height="15" viewBox="0 0 17 15"><rect x="1.5" y="1.5" width="14" height="10" fill="#fff" stroke="#666" stroke-width="1.2"/>
<path d="M1.5 13H7.5M9.5 13H15.5" stroke="#666" stroke-width="1.3"/>
<path d="M8.5 3.5L11 6.5L8.5 9.5L6 6.5Z" fill="none" stroke="#3c78c8" stroke-width="1.4"/></svg>
<svg style="position:absolute;left:328px;top:78px" width="16" height="18" viewBox="0 0 16 18"><rect x="1.5" y="1.5" width="12.5" height="15" fill="#f6f2f8" stroke="#aaa" stroke-width="1.1"/>
<rect x="1.5" y="1.5" width="12.5" height="2.5" fill="#aaa"/>
<circle cx="4.5" cy="7.6" r="1.1" fill="#999"/><circle cx="4.5" cy="11.8" r="1.1" fill="none" stroke="#999" stroke-width="0.8"/>
<path d="M7 7.6H12M7 11.8H12" stroke="#999" stroke-width="1"/></svg>
<svg style="position:absolute;left:330px;top:102px" width="14" height="17" viewBox="0 0 14 17"><path d="M1.5 11V1.5H8L11.5 5V9" fill="#fff" stroke="#aaa" stroke-width="1.1"/>
<path d="M8 1.5V5H11.5" fill="none" stroke="#aaa" stroke-width="1"/>
<rect x="3" y="10.5" width="5" height="3.5" rx="1.7" fill="none" stroke="#aaa" stroke-width="1.2"/>
<rect x="6.5" y="12" width="5" height="3.5" rx="1.7" fill="none" stroke="#aaa" stroke-width="1.2"/></svg>
<svg style="position:absolute;left:456px;top:64px" width="16" height="17" viewBox="0 0 16 17"><text x="0.6" y="7.1" font-size="9.8" font-family="Liberation Sans" fill="#3f7cc5" stroke="#3f7cc5" stroke-width="0.15">A</text>
<text x="0.6" y="15.1" font-size="9.8" font-family="Liberation Sans" fill="#8e4cae" stroke="#8e4cae" stroke-width="0.15">Z</text>
<path d="M11.5 0.5V15M9 12L11.5 14.8L14 12" fill="none" stroke="#666" stroke-width="1"/></svg>
<svg style="position:absolute;left:456px;top:95px" width="16" height="17" viewBox="0 0 16 17"><text x="0.6" y="7.1" font-size="9.8" font-family="Liberation Sans" fill="#8e4cae" stroke="#8e4cae" stroke-width="0.15">Z</text>
<text x="0.6" y="15.1" font-size="9.8" font-family="Liberation Sans" fill="#3f7cc5" stroke="#3f7cc5" stroke-width="0.15">A</text>
<path d="M11.5 0.5V15M9 12L11.5 14.8L14 12" fill="none" stroke="#666" stroke-width="1"/></svg>
<svg style="position:absolute;left:479px;top:58px" width="31" height="27" viewBox="0 0 31 27"><rect x="1.5" y="1.5" width="28" height="24" fill="#fff" stroke="#777" stroke-width="1"/>
<rect x="1" y="1" width="29" height="3.8" fill="#3f7cc5"/>
<path d="M15.5 4.8V25.5" stroke="#777" stroke-width="1"/>
<text x="4.3" y="13.6" font-size="10.5" font-family="Liberation Sans" fill="#8e4cae" stroke="#8e4cae" stroke-width="0.45">Z</text>
<text x="3.8" y="23.6" font-size="10.5" font-family="Liberation Sans" fill="#3f7cc5" stroke="#3f7cc5" stroke-width="0.45">A</text>
<text x="18.6" y="13.6" font-size="10.5" font-family="Liberation Sans" fill="#3f7cc5" stroke="#3f7cc5" stroke-width="0.45">A</text>
<text x="19" y="23.6" font-size="10.5" font-family="Liberation Sans" fill="#8e4cae" stroke="#8e4cae" stroke-width="0.45">Z</text></svg>
<svg style="position:absolute;left:531px;top:57px" width="29" height="29" viewBox="0 0 29 29"><path d="M1 1.2H28L17.5 14V27.8H12V14Z" fill="#6d6d6d"/>
<path d="M3.8 2.8L13.2 13.6V26.5" fill="none" stroke="#fff" stroke-width="1.1"/></svg>
<svg style="position:absolute;left:569px;top:55px" width="18" height="18" viewBox="0 0 18 18"><path d="M0.8 1H16.2L10.5 7.5V14.8H6.5V7.5Z" fill="#6d6d6d"/>
<path d="M9.5 9.5L16.5 16.5M16.5 9.5L9.5 16.5" stroke="#fff" stroke-width="3.2"/>
<path d="M9.8 9.8L16.5 16.5M16.5 9.8L9.8 16.5" stroke="#e0582e" stroke-width="1.8"/></svg>
<svg style="position:absolute;left:570px;top:79px" width="18" height="18" viewBox="0 0 18 18"><path d="M0.8 1H12.2L8 6V11.5H5V6Z" fill="#6d6d6d"/>
<circle cx="11.3" cy="11" r="5.8" fill="#fff"/>
<path d="M7.6 10A3.8 3.8 0 0 1 14.2 8.3" fill="none" stroke="#5fa88b" stroke-width="1.6"/>
<path d="M15.6 6.2V10.2H11.6Z" fill="#5fa88b"/>
<path d="M15 12A3.8 3.8 0 0 1 8.4 13.7" fill="none" stroke="#5fa88b" stroke-width="1.6"/>
<path d="M7 15.8V11.8H11Z" fill="#5fa88b"/></svg>
<svg style="position:absolute;left:570px;top:102px" width="18" height="18" viewBox="0 0 18 18"><path d="M0.8 1H12.2L8 6V11.5H5V6Z" fill="#6d6d6d"/>
<path d="M7.5 15.5L14.8 8.2" stroke="#fff" stroke-width="4.6"/>
<path d="M8 15L15 8" stroke="#3c78c8" stroke-width="2.8"/>
<path d="M6 16.6L6.9 13.6L8.9 15.6Z" fill="#3c78c8"/></svg>
<svg style="position:absolute;left:679px;top:57px" width="33" height="27" viewBox="0 0 33 27"><rect x="1.5" y="10.5" width="14.5" height="15" fill="#fff" stroke="#777" stroke-width="1.1"/>
<path d="M4 13.5H13.5M4 16.5H13.5M4 19.5H13.5M4 22.5H13.5" stroke="#3c78c8" stroke-width="1.1"/>
<rect x="18.5" y="13.5" width="12.5" height="10.5" fill="#fff" stroke="#777" stroke-width="1.1"/>
<rect x="18.5" y="13.5" width="12.5" height="2.5" fill="#777"/>
<path d="M20.5 18.3H23.5M26 18.3H29M20.5 21.5H23.5M26 21.5H29" stroke="#3c78c8" stroke-width="1"/>
<path d="M10.6 7.2Q16.2 -3.2 22.4 7" fill="none" stroke="#3c78c8" stroke-width="2"/>
<path d="M18.8 6.6H26.2L22.5 10.8Z" fill="#3c78c8"/></svg>
</body></html>
